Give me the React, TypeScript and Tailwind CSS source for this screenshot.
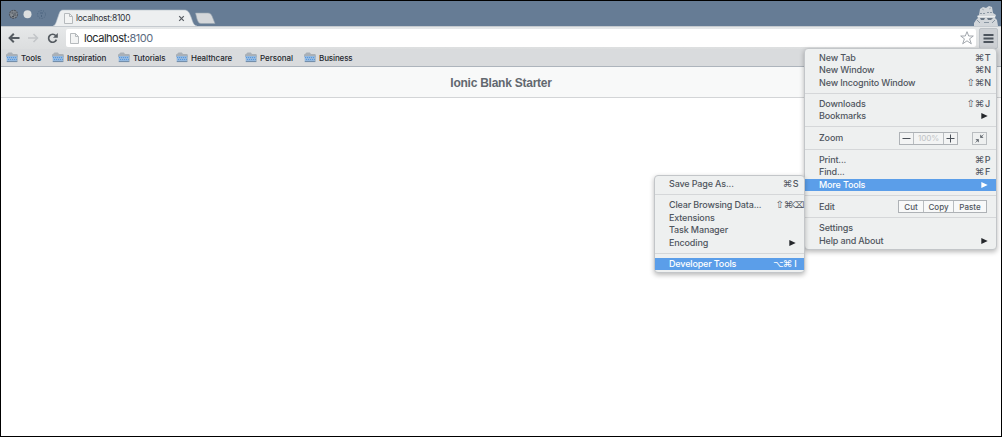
import type { ReactNode } from "react";

function Folder() {
  return (
    <svg width="12" height="11" viewBox="0 0 12 11" className="shrink-0">
      <path d="M0 2.5L1 2L2.5 .6H5.8L7 2H11.5V5H0Z" fill="#a9b0b7" />
      <path d="M.5 4H11.5L11 10H.8Z" fill="#94b9e0" />
      <path d="M1 5.5H11" stroke="#5798df" strokeDasharray="1 1" />
      <path d="M2 7.5H11" stroke="#5798df" strokeDasharray="1 1" />
      <path d="M.8 9.6H11.2" stroke="#718aa6" />
      <path d="M11.3 3V10" stroke="#9ba7b4" strokeWidth=".6" />
    </svg>
  );
}

function PageIcon() {
  return (
    <svg width="9" height="11" viewBox="0 0 9 11" className="shrink-0">
      <path d="M.5 .5H5.5L8.5 3.5V10.5H.5Z" fill="#f3f4f4" stroke="#b6babd" />
      <path d="M5.5 .5V3.5H8.5" fill="none" stroke="#b6babd" />
    </svg>
  );
}

function Arrow({ light = false }: { light?: boolean }) {
  return (
    <svg width="7" height="6" viewBox="0 0 7 6" className={light ? "text-white" : "text-[#24272b]"}>
      <path d="M.3 0L6.7 3L.3 6Z" fill="currentColor" />
    </svg>
  );
}

const keyStyles: Record<string, string> = {
  "⇧": "w-[9px] text-[10px]",
  "⌥": "w-[10px] text-[9px]",
  "⌘": "w-[9px] text-[9.5px]",
  "⌫": "w-[10px] text-[9px]",
};

function Keys({ value }: { value: string }) {
  return (
    <span className="flex items-center">
      {Array.from(value).map((c, i) => (
        <span
          key={i}
          className={
            keyStyles[c]
              ? `${keyStyles[c]} flex justify-center font-['DejaVu_Sans']`
              : "flex w-[7px] justify-center"
          }
        >
          {c}
        </span>
      ))}
    </span>
  );
}

function Item({ label, keys, arrow, active }: { label: string; keys?: string; arrow?: boolean; active?: boolean }) {
  return (
    <div className={`flex h-[12.5px] items-center justify-between pl-[14px] pr-[5px] ${active ? "bg-[#5b9ee9] text-white" : ""}`}>
      <span>{label}</span>
      {keys && <Keys value={keys} />}
      {arrow && <span className="pr-[3px]"><Arrow light={active} /></span>}
    </div>
  );
}

function Separator() {
  return (
    <div className="flex h-[8.5px] items-center">
      <div className="h-px w-full bg-[#d5d7d9]" />
    </div>
  );
}

function Menu({ className, children }: { className: string; children: ReactNode }) {
  return (
    <div className={`absolute rounded-[4px] border border-[#c3c6c9] bg-[#eef0f0] text-[9px] leading-[12px] font-medium tracking-[-0.15px] whitespace-nowrap text-[#50565e] shadow-[0_2px_5px_rgba(0,0,0,0.28)] ${className}`}>
      {children}
    </div>
  );
}

const bookmarks = [
  { name: "Tools", width: "w-[46px]", spacing: "tracking-[-0.08px]" },
  { name: "Inspiration", width: "w-[66px]", spacing: "tracking-[-0.1px]" },
  { name: "Tutorials", width: "w-[58px]", spacing: "tracking-[-0.05px]" },
  { name: "Healthcare", width: "w-[69px]", spacing: "tracking-[-0.07px]" },
  { name: "Personal", width: "w-[59px]", spacing: "tracking-[-0.07px]" },
  { name: "Business", width: "w-[60px]", spacing: "tracking-[-0.12px]" },
];

function Incognito() {
  return (
    <svg width="26" height="20" viewBox="0 0 26 20" className="mr-[2px]">
      <path d="M1 20V17L3 14L5 12L4 10L6 9L7 3L10 1L13 2L16 0L19 1L20 7L23 9L22 12L24 14L25 20Z" fill="#d2d6da" />
      <path d="M7 7.5H12M14 6.5H19" stroke="#8c98a4" strokeDasharray="2 1" />
      <path d="M5 10.5H22" stroke="#eceeef" />
      <path d="M7 12H12L11 14H8ZM14 12H20L18 14H15Z" fill="#697684" />
      <path d="M4 14L7 17M22 14L19 17M11 16.5H16" stroke="#8a96a2" fill="none" />
      <path d="M9 3L11 4M16 3L18 2" stroke="#aab3bc" />
    </svg>
  );
}

function TitleBar() {
  return (
    <div className="flex h-[25px] items-end justify-between bg-[#667c95]">
      <div className="flex h-full items-end">
        <svg width="52" height="25" viewBox="0 0 52 25">
          <circle cx="12.5" cy="13.3" r="4" fill="#858b91" stroke="#4f5660" strokeWidth="1.2" strokeDasharray="2 .7" />
          <path d="M10.5 12H12.5M12 14H15M11 15.5H13M14 11.5V13" stroke="#474e58" />
          <circle cx="26.5" cy="13.3" r="4" fill="#dddfe0" />
          <circle cx="40.5" cy="13.5" r="4" fill="none" stroke="#4d6580" strokeDasharray="1 1.5" />
          <path d="M39 12H42M40.5 14V16" stroke="#4d6580" />
        </svg>
        <div className="relative h-[17px] w-[145px]">
          <svg width="145" height="17" viewBox="0 0 145 17" className="absolute inset-0">
            <path d="M0 17C3 16 3 13 5 8C7 2 7 1 11 1H131C135 1 136 3 138 8C140 13 140 16 144 17Z" fill="#edeff0" />
            <path d="M0 17C3 16 3 13 5 8C7 2 7 1 11 1H131C135 1 136 3 138 8C140 13 140 16 144 17" fill="none" stroke="#b6c0ca" strokeWidth=".6" />
          </svg>
          <div className="relative flex h-full items-center pl-[11px] pt-px">
            <PageIcon />
            <span className="ml-[3px] w-[102px] text-[8.5px] tracking-[-0.28px] text-[#30343a]">localhost:8100</span>
            <svg width="7" height="7" viewBox="0 0 7 7" className="text-[#565b62]">
              <path d="M1.2 1.2L5.8 5.8M5.8 1.2L1.2 5.8" stroke="currentColor" strokeWidth="1.2" />
            </svg>
          </div>
        </div>
        <svg width="24" height="15" viewBox="0 0 24 15" className="-ml-[4px]">
          <path d="M1.5 2H14C16 2 17 3 18 5L21 12.5H7C5 12.5 4 11 3 8Z" fill="#d4d7da" stroke="#98a4b0" strokeWidth=".6" />
        </svg>
      </div>
      <Incognito />
    </div>
  );
}

function Toolbar() {
  return (
    <div className="flex h-[23px] items-center border-t border-[#c5cacf] bg-linear-to-b from-[#e6e8e9] to-[#dcdedf] pl-[6px]">
      <svg width="59" height="22" viewBox="0 0 59 22" fill="none" className="shrink-0">
        <path d="M12.5 11H2.5M6.8 6.8L2.6 11L6.8 15.2" stroke="#555b61" strokeWidth="2" />
        <path d="M21 11H30M26.5 7L30.5 11L26.5 15" stroke="#c2c5c8" strokeWidth="1.5" />
        <path d="M48.8 8.8A4 4 0 1 0 49.4 12.6" stroke="#555b61" strokeWidth="1.7" />
        <path d="M50.8 6V10.8H46Z" fill="#555b61" />
      </svg>
      <div className="flex h-[18px] w-[910px] shrink-0 items-center rounded-[2px] bg-white pl-[4px] pr-[2px]">
        <PageIcon />
        <span className="ml-[5px] flex-1 pt-px text-[11px] tracking-[-0.48px] text-[#25282c]">localhost:<span className="text-[#5c6c81]">8100</span></span>
        <svg width="14" height="14" viewBox="0 0 14 14">
          <path d="M7 .7L8.7 5H13.3L9.6 7.8L11.3 12.8L7 9.8L2.7 12.8L4.4 7.8L.7 5H5.3Z" fill="#fff" stroke="#979da4" strokeWidth=".9" />
        </svg>
      </div>
      <div className="ml-[3px] flex h-[21px] w-[19px] shrink-0 items-center justify-center rounded-[2px] border border-[#bcc1c6] bg-[#cdd0d4]">
        <svg width="11" height="11" viewBox="0 0 11 11">
          <path d="M.5 2H10.5M.5 5.5H10.5M.5 9H10.5" stroke="#4d545d" strokeWidth="2" />
        </svg>
      </div>
    </div>
  );
}

export default function App() {
  return (
    <div className="relative h-[437px] w-[1002px] overflow-hidden border border-black bg-white font-['Inter','Liberation_Sans',sans-serif] antialiased">
      <TitleBar />
      <Toolbar />
      <div className="flex h-[18px] items-center border-b border-[#adb4bc] bg-[#d9dbdd] pl-[5px]">
        {bookmarks.map((b) => (
          <div key={b.name} className={`flex shrink-0 items-center gap-[3px] ${b.width}`}>
            <Folder />
            <span className={`text-[8px] font-medium text-[#24272d] ${b.spacing}`}>{b.name}</span>
          </div>
        ))}
      </div>
      <header className="flex h-[31px] items-center justify-center border-b border-[#d3d5d7] bg-[#f8f9f9] pt-px">
        <h1 className="font-['Liberation_Sans'] text-[12px] font-bold tracking-[-0.25px] text-[#62686f]">Ionic Blank Starter</h1>
      </header>

      <Menu className="left-[803px] top-[47px] h-[202px] w-[193px] pt-[2.5px]">
        <Item label="New Tab" keys="⌘T" />
        <Item label="New Window" keys="⌘N" />
        <Item label="New Incognito Window" keys="⇧⌘N" />
        <Separator />
        <Item label="Downloads" keys="⇧⌘J" />
        <Item label="Bookmarks" arrow />
        <Separator />
        <div className="flex h-[14px] items-center pl-[14px]">
          <span className="w-[80px]">Zoom</span>
          <div className="flex h-[13px] w-[59px] border border-[#aeb2b6] bg-[#f3f4f4]">
            <span className="flex w-[14px] items-center justify-center border-r border-[#b9bdc0]">
              <svg width="9" height="9" viewBox="0 0 9 9"><path d="M.5 4.5H8.5" stroke="#4b5159" /></svg>
            </span>
            <span className="flex flex-1 items-center justify-center text-[8px] text-[#c5c8ca]">100%</span>
            <span className="flex w-[14px] items-center justify-center border-l border-[#b9bdc0]">
              <svg width="9" height="9" viewBox="0 0 9 9"><path d="M.5 4.5H8.5M4.5 .5V8.5" stroke="#4b5159" /></svg>
            </span>
          </div>
          <span className="ml-[14px] flex h-[13px] w-[15px] items-center justify-center border border-[#b9bdc0]">
            <svg width="9" height="9" viewBox="0 0 9 9">
              <path d="M5.3 .5V3.7H8.5ZM.5 5.3H3.7V8.5Z" fill="#4b5159" />
              <path d="M5.5 3.5L8.5 .5M3.5 5.5L.5 8.5" stroke="#6b7178" strokeWidth=".8" />
            </svg>
          </span>
        </div>
        <Separator />
        <Item label="Print..." keys="⌘P" />
        <Item label="Find..." keys="⌘F" />
        <Item label="More Tools" arrow active />
        <Separator />
        <div className="flex h-[14px] items-center pl-[14px]">
          <span className="w-[79px]">Edit</span>
          <div className="flex h-[13px] w-[89px] items-stretch border border-[#aeb2b6] bg-[#f8f9f9] text-[8px] tracking-normal">
            <span className="flex w-[25px] items-center justify-center border-r border-[#b9bdc0]">Cut</span>
            <span className="flex w-[30px] items-center justify-center border-r border-[#b9bdc0]">Copy</span>
            <span className="flex flex-1 items-center justify-center">Paste</span>
          </div>
        </div>
        <Separator />
        <Item label="Settings" />
        <Item label="Help and About" arrow />
      </Menu>

      <Menu className="left-[653px] top-[174px] h-[98px] w-[151px] pt-[2px]">
        <Item label="Save Page As..." keys="⌘S" />
        <Separator />
        <div className="-mr-[4px]"><Item label="Clear Browsing Data..." keys="⇧⌘⌫" /></div>
        <Item label="Extensions" />
        <Item label="Task Manager" />
        <Item label="Encoding" arrow />
        <Separator />
        <Item label="Developer Tools" keys="⌥⌘I" active />
      </Menu>
    </div>
  );
}
